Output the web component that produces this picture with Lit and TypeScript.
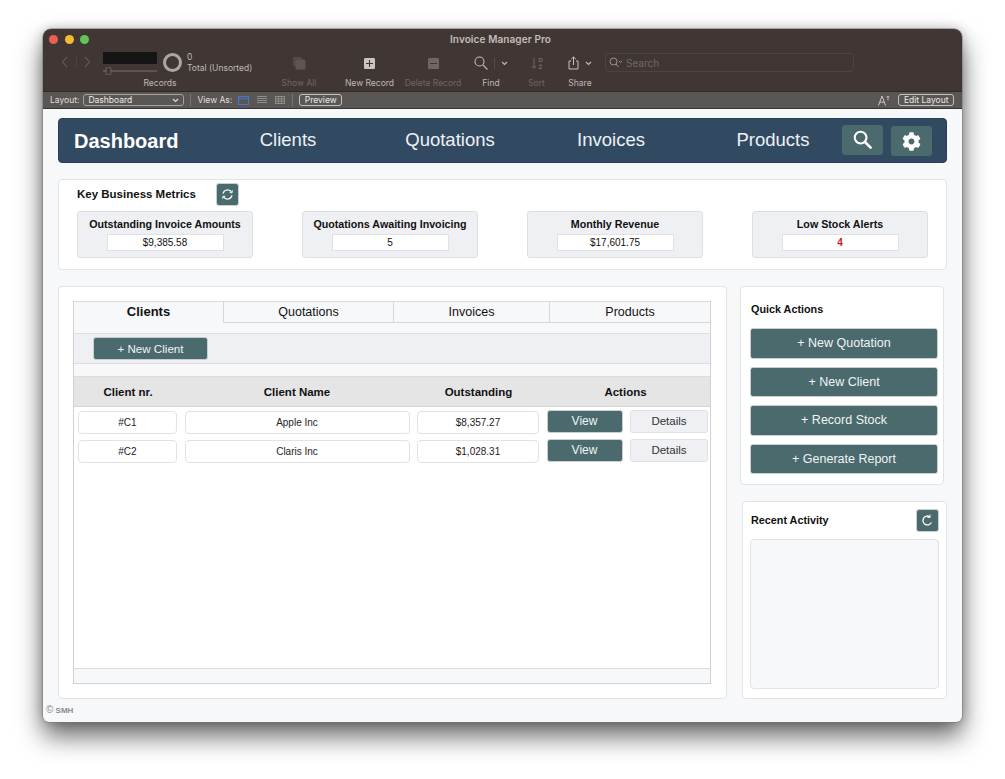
import { LitElement, html, css, svg } from "lit";
import { customElement } from "lit/decorators.js";

const gear = svg`<path d="M487.4 315.7l-42.6-24.6c4.3-23.2 4.3-47 0-70.2l42.6-24.6c4.9-2.8 7.1-8.6 5.5-14-11.1-35.6-30-67.8-54.7-94.6-3.8-4.1-10-5.1-14.8-2.3L380.8 110c-17.9-15.4-38.5-27.3-60.8-35.1V25.8c0-5.6-3.9-10.5-9.4-11.7-36.7-8.2-74.3-7.8-109.2 0-5.5 1.2-9.4 6.1-9.4 11.7V75c-22.2 7.9-42.8 19.8-60.8 35.1L88.7 85.5c-4.9-2.8-11-1.9-14.8 2.3-24.7 26.7-43.6 58.9-54.7 94.6-1.7 5.4.6 11.2 5.5 14L67.3 221c-4.3 23.2-4.3 47 0 70.2l-42.6 24.6c-4.9 2.8-7.1 8.6-5.5 14 11.1 35.6 30 67.8 54.7 94.6 3.8 4.1 10 5.1 14.8 2.3l42.6-24.6c17.9 15.4 38.5 27.3 60.8 35.1v49.2c0 5.6 3.9 10.5 9.4 11.7 36.7 8.2 74.3 7.8 109.2 0 5.5-1.2 9.4-6.1 9.4-11.7v-49.2c22.2-7.9 42.8-19.8 60.8-35.1l42.6 24.6c4.9 2.8 11 1.9 14.8-2.3 24.7-26.7 43.6-58.9 54.7-94.6 1.5-5.5-.7-11.3-5.6-14.1zM256 336c-44.1 0-80-35.9-80-80s35.9-80 80-80 80 35.9 80 80-35.9 80-80 80z"/>`;

@customElement("app-root")
export class AppRoot extends LitElement {
  static styles = css`
    :host { display: block; background: #fff; padding: 29px 43px 57px 43px; height: 779px; box-sizing: border-box; font-family: "Liberation Sans", Arial, sans-serif; color: #111; }
    * { box-sizing: border-box; }
    .window { height: 693px; border-radius: 8px 8px 6px 6px; background: #f7f8fa; box-shadow: 0 0 0 .5px #777, 0 14px 26px rgba(0,0,0,.6), 0 0 12px rgba(0,0,0,.22); display: flex; flex-direction: column; overflow: hidden; }
    .chrome { background: #403735; height: 62px; font-family: "Inter", "Liberation Sans", sans-serif; color: #bdb8b5; flex: none; }
    .titlerow { height: 21px; display: flex; align-items: center; position: relative; padding-left: 6px; }
    .lights { display: flex; gap: 6.5px; }
    .lights i { width: 9px; height: 9px; border-radius: 50%; display: block; }
    .title { position: absolute; left: 0; right: 4px; text-align: center; font-size: 10px; font-weight: 600; color: #c3bebb; top: 4px; letter-spacing: .1px; }
    .tools { display: grid; grid-template-columns: 59px 158px 78px 63px 64px 52px 39px 48px 1fr; height: 41px; }
    .tool { display: flex; flex-direction: column; align-items: center; justify-content: flex-start; font-size: 8.5px; white-space: nowrap; }
    .tool svg { display: block; }
    .ticon { height: 24px; display: flex; align-items: center; justify-content: center; gap: 6px; margin-top: 1px; }
    .tlabel { height: 12px; line-height: 12px; margin-top: 2px; }
    .dim { color: #6e6663; }
    .arrows { display: flex; gap: 6.5px; padding: 6px 0 0 18px; align-items: flex-start; }
    .records { display: grid; grid-template-columns: 56px 28px 1fr; position: relative; height: 41px; margin-left: 1px; }
    .recslider { display: flex; flex-direction: column; gap: 3px; padding-top: 2px; }
    .recbox { width: 54px; height: 12px; background: #151515; }
    .recring { width: 19px; height: 19px; border: 3px solid #a9a6a4; border-radius: 50%; margin: 3px 0 0 4px; }
    .rectext { font-size: 8.5px; line-height: 11px; padding-top: 2px; white-space: nowrap; }
    .reclabel { position: absolute; left: 0; width: 114px; text-align: center; top: 27px; font-size: 8.5px; line-height: 12px; }
    .search { display: flex; align-items: center; gap: 3px; width: 249px; height: 19px; margin: 3px 0 0 1px; border: 1px solid #4d4441; border-radius: 4px; padding-left: 3px; font-size: 10px; color: #6f6764; }
    .layoutbar { height: 18px; background: #5a5653; border-top: 1px solid #2f2a28; border-bottom: 1px solid #38332f; display: flex; align-items: center; font-family: "Inter", "Liberation Sans", sans-serif; font-size: 8.5px; color: #e2dfdd; padding: 0 8px 0 7px; flex: none; }
    .select { width: 101px; height: 12px; margin-left: 4px; border: 1px solid #a5a19e; border-radius: 3px; display: flex; align-items: center; justify-content: space-between; padding: 0 4px; color: #ece9e7; }
    .sep { width: 1px; height: 12px; background: #7a7572; margin: 0 6px; }
    .views { display: flex; gap: 8px; margin: 0 7px 0 6px; align-items: center; }
    .pill { border: 1px solid #c2bfbc; border-radius: 3px; height: 12px; line-height: 10px; padding: 0 4.5px; color: #ece9e7; }
    .grow { flex: 1; }
    .content { flex: 1; padding: 9px 15px 0; display: flex; flex-direction: column; }
    .nav { height: 45px; flex: none; background: #314a61; border: 1px solid #2a3f53; border-radius: 4px; display: grid; grid-template-columns: 135px 188px 136px 186px 138px 41px 8px 41px; align-items: center; color: #fff; }
    .brand { font-size: 20px; font-weight: 700; padding-left: 15px; line-height: 1; padding-top: 1px; white-space: nowrap; }
    .nav a { font-size: 18.5px; text-align: center; color: #eef1f4; margin-top: -1px; }
    .navbtn { width: 41px; height: 30px; background: #4a6a6d; border-radius: 3px; display: flex; align-items: center; justify-content: center; margin-top: -2px; }
    .navbtn.b2 { margin-top: 1px; }
    .card { background: #fff; border: 1px solid #e3e4e6; border-radius: 4px; }
    .metrics { height: 91px; margin-top: 16px; padding: 3px 18px 0; flex: none; }
    .mhead { display: flex; align-items: center; height: 23px; gap: 20px; }
    .mhead b { font-size: 11.5px; font-weight: 700; color: #111; white-space: nowrap; padding-bottom: 2px; }
    .side-title { font-size: 10.8px; font-weight: 700; color: #111; }
    .iconbtn { width: 23px; height: 23px; background: #4a6a6d; border: 1px solid #c9cfd0; border-radius: 3px; display: flex; align-items: center; justify-content: center; flex: none; }
    .mrow { display: flex; justify-content: space-between; margin-top: 5px; }
    .metric { width: 176px; height: 47px; background: #eef0f3; border: 1px solid #dddfe2; border-radius: 3px; display: flex; flex-direction: column; align-items: center; padding-top: 5.5px; }
    .metric b { font-size: 10.7px; line-height: 13px; white-space: nowrap; }
    .metric span { width: 117px; height: 17px; background: #fff; border: 1px solid #dfe1e4; margin-top: 3.5px; font-size: 10px; line-height: 16px; text-align: center; }
    .metric span.red { color: #c8201c; font-weight: 700; }
    .main { display: flex; margin-top: 16px; gap: 13px; height: 413px; flex: none; }
    .panel { width: 669px; padding: 14px 15px 14px 14px; flex: none; }
    .table { height: 383px; border: 1px solid #cfd1d3; border-top-color: #d8d9db; background: #fff; display: flex; flex-direction: column; }
    .tabs { display: grid; grid-template-columns: 149px 170px 156px 1fr; height: 21px; flex: none; background: #f7f8fa; border-bottom: 1px solid #d6d7d9; font-size: 12.5px; text-align: center; line-height: 20px; }
    .tabs div + div { border-left: 1px solid #d6d7d9; }
    .tabs .on { font-weight: 700; background: #f7f8fa; height: 21px; position: relative; line-height: 19px; font-size: 13px; }
    .tabs .on::after { content: ""; position: absolute; left: 0; right: 0; bottom: -1px; height: 1px; background: #f7f8fa; }
    .gapa { height: 10px; background: #f7f8fa; flex: none; }
    .strip { height: 31px; background: #eef0f3; border-top: 1px solid #dcdee0; border-bottom: 1px solid #dcdee0; padding: 3px 0 0 19px; flex: none; }
    .btn { background: #4a6a6d; color: #f1f4f4; border: 1px solid #c9cfd0; border-radius: 3px; display: flex; align-items: center; justify-content: center; }
    .strip .btn { width: 115px; height: 23px; font-size: 11.6px; }
    .gapb { height: 12px; background: #f7f8fa; flex: none; }
    .head { height: 31px; background: #e5e5e5; border-top: 1px solid #dcdcdc; border-bottom: 1px solid #d5d5d5; display: grid; grid-template-columns: 108px 230px 133px 1fr; font-size: 11.5px; font-weight: 700; align-items: center; text-align: center; flex: none; }
    .head div:nth-child(4) { padding-right: 4px; }
    .rows { flex: 1; padding-top: 3px; }
    .row { display: grid; grid-template-columns: 99px 225px 122px 76px 78px; column-gap: 7.5px; padding-left: 4px; height: 29px; }
    .fld { height: 23px; margin-top: 1px; background: #fff; border: 1px solid #e1e2e4; border-radius: 4px; font-size: 10px; line-height: 21px; text-align: center; color: #222; }
    .row .btn, .row .ghost { height: 22.5px; font-size: 12px; }
    .row .ghost { font-size: 11.5px; }
    .ghost { background: #eef0f3; border: 1px solid #dfe1e4; border-radius: 3px; display: flex; align-items: center; justify-content: center; color: #333; }
    .foot { height: 15px; background: #f7f8fa; border-top: 1px solid #dcdddf; flex: none; }
    .side { width: 207px; display: flex; flex-direction: column; gap: 16px; flex: none; }
    .quick { width: 204px; height: 199px; padding: 0 5px 0 9px; }
    .side-title { height: 22px; line-height: 22px; display: block; white-space: nowrap; }
    .quick .side-title { margin: 11px 0 0 1px; }
    .qlist { display: flex; flex-direction: column; gap: 8px; margin-top: 8px; }
    .qlist .btn { height: 30.5px; font-size: 12.5px; }
    .recent { height: 198px; margin-left: 2px; width: 204.5px; padding: 5px 7px 9px 7px; display: flex; flex-direction: column; }
    .rhead { display: flex; justify-content: space-between; align-items: center; height: 26px; padding-left: 1px; }
    .rbox { flex: 1; margin-top: 6px; background: #f7f8fa; border: 1px solid #e2e3e5; border-radius: 4px; }
    .copy { font-size: 8px; font-weight: 700; color: #8a8c8e; padding: 6px 0 0 0; margin-left: -12px; line-height: 10px; }
    .copy span { font-size: 10px; font-weight: 400; }
  `;

  render() {
    const refresh = html`<svg width="13" height="13" viewBox="0 0 16 16" fill="none" stroke="#fff" stroke-width="1.5"><path d="M2.5 7A5.6 5.6 0 0 1 13 5.5"/><path d="M13.5 9A5.6 5.6 0 0 1 3 10.5"/><path d="M13.8 2.6v3.2h-3.2" stroke-width="1.1"/><path d="M2.2 13.4v-3.2h3.2" stroke-width="1.1"/></svg>`;
    return html`<div class="window">
      <div class="chrome">
        <div class="titlerow">
          <div class="lights"><i style="background:#ec5f57"></i><i style="background:#f5bc2f"></i><i style="background:#62c554"></i></div>
          <div class="title">Invoice Manager Pro</div>
        </div>
        <div class="tools">
          <div class="arrows">
            <svg width="8" height="12" viewBox="0 0 8 12" fill="none" stroke="#5f5653" stroke-width="1.2"><path d="M6 1 1.5 6 6 11"/></svg>
            <svg width="1" height="12"><rect width="1" height="12" fill="#4c4341"/></svg>
            <svg width="8" height="12" viewBox="0 0 8 12" fill="none" stroke="#5f5653" stroke-width="1.2"><path d="M2 1 6.5 6 2 11"/></svg>
          </div>
          <div class="records">
            <div class="recslider">
              <div class="recbox"></div>
              <svg width="54" height="8" viewBox="0 0 54 8"><rect x="0" y="3" width="54" height="2" fill="#5c5350"/><rect x="3" y="0" width="5" height="8" rx="2" fill="#403735" stroke="#6d6562"/></svg>
            </div>
            <div class="recring"></div>
            <div class="rectext">0<br />Total (Unsorted)</div>
            <div class="reclabel">Records</div>
          </div>
          <div class="tool dim"><div class="ticon"><svg width="14" height="14" viewBox="0 0 14 14" fill="#5e5553"><rect x="1" y="1" width="9" height="9" rx="1.5" fill="#544b49"/><rect x="3.5" y="3.5" width="10" height="10" rx="1.5"/></svg></div><div class="tlabel">Show All</div></div>
          <div class="tool"><div class="ticon"><svg width="11" height="11" viewBox="0 0 11 11"><rect width="11" height="11" rx="1.2" fill="#c9c5c2"/><path d="M5.5 2v7M2 5.5h7" stroke="#403735" stroke-width="1.1"/></svg></div><div class="tlabel">New Record</div></div>
          <div class="tool dim"><div class="ticon"><svg width="11" height="11" viewBox="0 0 11 11"><rect width="11" height="11" rx="1.2" fill="#6e6663"/><path d="M2 5.5h7" stroke="#403735" stroke-width="1.1"/></svg></div><div class="tlabel">Delete Record</div></div>
          <div class="tool"><div class="ticon" style="gap:6px"><svg width="14" height="14" viewBox="0 0 14 14" fill="none" stroke="#bdb8b5" stroke-width="1.1"><circle cx="5.5" cy="5.5" r="4.5"/><path d="M9 9l4.5 4.5"/></svg><svg width="1" height="11"><rect width="1" height="11" fill="#554c4a"/></svg><svg width="7" height="5" viewBox="0 0 7 5" fill="none" stroke="#bdb8b5" stroke-width="1.2"><path d="M1 1l2.5 2.5L6 1"/></svg></div><div class="tlabel">Find</div></div>
          <div class="tool dim"><div class="ticon"><svg width="12" height="13" viewBox="0 0 12 13" fill="none" stroke="#6e6663" stroke-width="1"><path d="M3 1v10M1 9l2 2.5L5 9"/><path d="M8 1.5h3v3h-3zM8 8h3l-3 3.5h3"/></svg></div><div class="tlabel">Sort</div></div>
          <div class="tool"><div class="ticon"><svg width="11" height="14" viewBox="0 0 11 14" fill="none" stroke="#c4c0bd" stroke-width="1"><path d="M3 5H1v8h9V5H8"/><path d="M5.5 9V1M3.2 3l2.3-2 2.3 2"/></svg><svg width="7" height="5" viewBox="0 0 7 5" fill="none" stroke="#bdb8b5" stroke-width="1.2"><path d="M1 1l2.5 2.5L6 1"/></svg></div><div class="tlabel">Share</div></div>
          <div class="search"><svg width="14" height="11" viewBox="0 0 14 11" fill="none" stroke="#9a9492" stroke-width="1"><circle cx="4.5" cy="4.5" r="3.5"/><path d="M7 7l2.5 3"/><path d="M10 4l1.5 1.5L13 4"/></svg>Search</div>
        </div>
      </div>
      <div class="layoutbar">
        <span>Layout:</span>
        <div class="select"><span>Dashboard</span><svg width="7" height="5" viewBox="0 0 7 5" fill="none" stroke="#ddd" stroke-width="1.1"><path d="M1 1l2.5 2.5L6 1"/></svg></div>
        <div class="sep"></div>
        <span>View As:</span>
        <div class="views">
          <svg width="11" height="9" viewBox="0 0 11 9" fill="none" stroke="#3f7ad0" stroke-width="1"><rect x=".5" y=".5" width="10" height="8"/><path d="M.5 2.8h10"/></svg>
          <svg width="10" height="8" viewBox="0 0 10 8" stroke="#8f8b88" stroke-width="1"><path d="M0 .5h10M0 2.5h10M0 4.5h10M0 6.5h10"/></svg>
          <svg width="10" height="8" viewBox="0 0 10 8" fill="none" stroke="#8f8b88" stroke-width="1"><rect x=".5" y=".5" width="9" height="7"/><path d="M0 3h10M0 5.3h10M3.5 1v7M6.5 1v7"/></svg>
        </div>
        <div class="sep" style="margin:0 6px 0 0"></div>
        <div class="pill">Preview</div>
        <div class="grow"></div>
        <svg width="12" height="11" viewBox="0 0 12 11" fill="none" stroke="#d6d3d1" stroke-width=".9" style="margin-right:8px"><path d="M.5 10.5 4 1l3.5 9.5M1.7 7.2h4.6"/><path d="M9 1.5h2v1.4H9zM9 4.5h2" stroke-width=".6"/></svg>
        <div class="pill">Edit Layout</div>
      </div>
      <div class="content">
        <div class="nav">
          <div class="brand">Dashboard</div>
          <a>Clients</a><a>Quotations</a><a>Invoices</a><a>Products</a>
          <div class="navbtn"><svg width="19" height="19" viewBox="0 0 19 19" fill="none" stroke="#fff" stroke-width="2.1"><circle cx="7.6" cy="7.6" r="5.9"/><path d="M12 12l5.6 5.6" stroke-linecap="round" stroke-width="2.6"/></svg></div>
          <div></div>
          <div class="navbtn b2"><svg width="19" height="19" viewBox="0 0 512 512" fill="#fff">${gear}</svg></div>
        </div>

        <div class="card metrics">
          <div class="mhead"><b>Key Business Metrics</b><div class="iconbtn">${refresh}</div></div>
          <div class="mrow">
            <div class="metric"><b>Outstanding Invoice Amounts</b><span>$9,385.58</span></div>
            <div class="metric"><b>Quotations Awaiting Invoicing</b><span>5</span></div>
            <div class="metric"><b>Monthly Revenue</b><span>$17,601.75</span></div>
            <div class="metric"><b>Low Stock Alerts</b><span class="red">4</span></div>
          </div>
        </div>

        <div class="main">
          <div class="card panel">
            <div class="table">
              <div class="tabs"><div class="on">Clients</div><div>Quotations</div><div>Invoices</div><div>Products</div></div>
              <div class="gapa"></div>
              <div class="strip"><div class="btn">+ New Client</div></div>
              <div class="gapb"></div>
              <div class="head"><div>Client nr.</div><div>Client Name</div><div>Outstanding</div><div>Actions</div></div>
              <div class="rows">
                <div class="row"><div class="fld">#C1</div><div class="fld">Apple Inc</div><div class="fld">$8,357.27</div><div class="btn">View</div><div class="ghost">Details</div></div>
                <div class="row"><div class="fld">#C2</div><div class="fld">Claris Inc</div><div class="fld">$1,028.31</div><div class="btn">View</div><div class="ghost">Details</div></div>
              </div>
              <div class="foot"></div>
            </div>
          </div>
          <div class="side">
            <div class="card quick">
              <span class="side-title">Quick Actions</span>
              <div class="qlist">
                <div class="btn">+ New Quotation</div>
                <div class="btn">+ New Client</div>
                <div class="btn">+ Record Stock</div>
                <div class="btn">+ Generate Report</div>
              </div>
            </div>
            <div class="card recent">
              <div class="rhead"><span class="side-title">Recent Activity</span>
                <div class="iconbtn"><svg width="13" height="13" viewBox="0 0 16 16" fill="none" stroke="#fff" stroke-width="1.6"><path d="M12.8 10.5A5.5 5.5 0 1 1 11 3.4"/><path d="M11.2 .8v3.4H7.8" stroke-width="1.2"/></svg></div>
              </div>
              <div class="rbox"></div>
            </div>
          </div>
        </div>
        <div class="copy"><span>©</span> SMH</div>
      </div>
    </div>`;
  }
}
